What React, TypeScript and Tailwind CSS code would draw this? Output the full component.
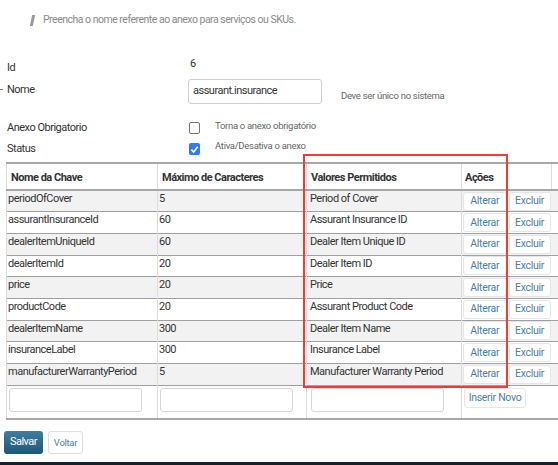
import React from "react";

const rows = [
  ["periodOfCover", "5", "Period of Cover"],
  ["assurantInsuranceId", "60", "Assurant Insurance ID"],
  ["dealerItemUniqueId", "60", "Dealer Item Unique ID"],
  ["dealerItemId", "20", "Dealer Item ID"],
  ["price", "20", "Price"],
  ["productCode", "20", "Assurant Product Code"],
  ["dealerItemName", "300", "Dealer Item Name"],
  ["insuranceLabel", "300", "Insurance Label"],
  ["manufacturerWarrantyPeriod", "5", "Manufacturer Warranty Period"],
];

const font = { fontFamily: '"Roboto", "Liberation Sans", sans-serif' };

function Check({ checked }: { checked?: boolean }) {
  return checked ? (
    <div className="w-[11px] h-[12px] rounded-[2px] bg-[#2f7cf6] flex items-center justify-center">
      <svg width="9" height="9" viewBox="0 0 10 10">
        <path d="M1.5 5.2 L4 7.8 L8.6 2" stroke="white" strokeWidth="1.8" fill="none" />
      </svg>
    </div>
  ) : (
    <div className="w-[11px] h-[12px] rounded-[2px] border border-[#777] bg-white" />
  );
}

function Btn({ children }: { children: React.ReactNode }) {
  return (
    <div className="h-[19px] mx-[1px] rounded-[3px] border border-[#e6e6e6] bg-white flex items-center justify-center text-[10.5px] tracking-[-0.3px] text-[#4a7fa8]">
      {children}
    </div>
  );
}

export default function App() {
  return (
    <div className="relative w-[558px] h-[465px] overflow-hidden bg-white text-[#333] tracking-[-0.5px]" style={font}>
      {/* hint */}
      <div className="h-[40px] flex items-center pl-[31px] gap-[9px]">
        <div className="w-[3px] h-[11px] bg-[#999] skew-x-[-12deg]" />
        <span className="text-[10.5px] text-[#8a8a8a]">Preencha o nome referente ao anexo para serviços ou SKUs.</span>
      </div>

      <div className="mt-[18px] pl-[7px] text-[11px]">
        {/* Id */}
        <div className="flex h-[20px] items-center">
          <div className="w-[183px]">Id</div>
          <div className="self-start mt-[-2px]">6</div>
        </div>
        {/* Nome */}
        <div className="relative flex h-[28px] items-start">
          <div className="absolute -left-[7px] top-[11px] w-[3px] h-[1px] bg-[#777]" />
          <div className="w-[181px] pt-[4px]">Nome</div>
          <div className="mt-[1px] w-[134px] h-[25px] rounded-[3px] border border-[#d0d0d0] flex items-center pl-[4px] text-[11px]">
            assurant.insurance
          </div>
          <div className="ml-[19px] mt-[11px] text-[9.5px] tracking-[-0.3px] text-[#666]">Deve ser único no sistema</div>
        </div>
        {/* Anexo */}
        <div className="flex h-[20px] items-center mt-[12px]">
          <div className="w-[182px]">Anexo Obrigatorio</div>
          <Check />
          <div className="ml-[15px] -mt-[4px] text-[9.5px] tracking-[-0.3px] text-[#666]">Torna o anexo obrigatório</div>
        </div>
        {/* Status */}
        <div className="flex h-[20px] items-center mt-[1px]">
          <div className="w-[182px]">Status</div>
          <Check checked />
          <div className="ml-[15px] -mt-[6px] text-[9.5px] tracking-[-0.3px] text-[#666]">Ativa/Desativa o anexo</div>
        </div>
      </div>

      {/* table */}
      <div className="mt-[3px] ml-[6px]">
        <table className="table-fixed border-collapse w-[560px] text-[11px]">
          <colgroup>
            <col className="w-[151px]" />
            <col className="w-[149px]" />
            <col className="w-[155px]" />
            <col className="w-[46px]" />
            <col className="w-[44px]" />
            <col />
          </colgroup>
          <thead>
            <tr className="h-[27px] border-t-2 border-b-2 border-[#a8a8a8]">
              <th className="text-left font-bold align-bottom pb-[4px] pl-[4px] leading-[14px] border-l border-[#ddd]">Nome da Chave</th>
              <th className="text-left font-bold align-bottom pb-[4px] pl-[4px] leading-[14px] border-l border-[#ddd]">Máximo de Caracteres</th>
              <th className="text-left font-bold align-bottom pb-[4px] pl-[4px] leading-[14px] border-l border-[#ddd]">Valores Permitidos</th>
              <th colSpan={2} className="text-left font-bold align-bottom pb-[4px] pl-[3px] leading-[14px] border-l border-[#ddd]">Ações</th>
              <th className="border-l border-[#ddd]" />
            </tr>
          </thead>
          <tbody>
            {rows.map((r, i) => (
              <tr key={r[0]} className={`h-[21.7px] border-b border-[#a0a0a0] ${i % 2 === 0 ? "bg-[#f2f2f2]" : "bg-white"}`}>
                <td className="align-top p-0 pl-[1px] pt-[1px] border-l border-[#ddd] leading-[14px] whitespace-nowrap">{r[0]}</td>
                <td className="align-top p-0 pl-[1px] pt-[1px] border-l border-[#ddd] leading-[14px]">{r[1]}</td>
                <td className="align-top p-0 pl-[3px] pt-[1px] border-l border-[#ddd] leading-[14px] whitespace-nowrap">{r[2]}</td>
                <td className="border-l border-[#ddd] p-0"><Btn>Alterar</Btn></td>
                <td className="p-0"><Btn>Excluir</Btn></td>
                <td className="p-0" />
              </tr>
            ))}
            <tr className="h-[34px] border-b-2 border-[#a8a8a8]">
              <td className="align-top p-0 pt-[2px] pl-[2px] border-l border-[#ddd]">
                <div className="w-[133px] h-[24px] rounded-[3px] border border-[#d6d6d6] bg-white" />
              </td>
              <td className="align-top p-0 pt-[2px] pl-[2px] border-l border-[#ddd]">
                <div className="w-[133px] h-[24px] rounded-[3px] border border-[#d6d6d6] bg-white" />
              </td>
              <td className="align-top p-0 pt-[2px] pl-[4px] border-l border-[#ddd]">
                <div className="w-[133px] h-[24px] rounded-[3px] border border-[#d6d6d6] bg-white" />
              </td>
              <td colSpan={2} className="align-top p-0 pt-[2px] pl-[2px] border-l border-[#ddd]">
                <div className="w-[62px] h-[20px] rounded-[3px] border border-[#e6e6e6] bg-white flex items-center justify-center text-[10.5px] tracking-[-0.3px] text-[#4a7fa8] whitespace-nowrap">
                  Inserir Novo
                </div>
              </td>
              <td className="p-0" />
            </tr>
          </tbody>
        </table>
      </div>

      {/* buttons */}
      <div className="mt-[11px] ml-[4px] flex gap-[5px]">
        <div className="w-[39px] h-[23px] rounded-[3px] bg-gradient-to-b from-[#3f7da0] to-[#1f5878] text-white text-[11px] flex items-center justify-center">
          Salvar
        </div>
        <div className="w-[35px] h-[23px] rounded-[3px] border border-[#dedede] bg-white text-[#4a7fa8] text-[9.5px] tracking-[-0.3px] flex items-center justify-center">
          Voltar
        </div>
      </div>

      {/* bottom bar */}
      <div className="absolute left-0 right-0 bottom-0 h-[3px] bg-[#15202b]" />

      {/* red highlight */}
      <div className="absolute left-[303px] top-[154px] w-[205px] h-[234px] border-2 border-[#ee3b3b]" />
    </div>
  );
}
